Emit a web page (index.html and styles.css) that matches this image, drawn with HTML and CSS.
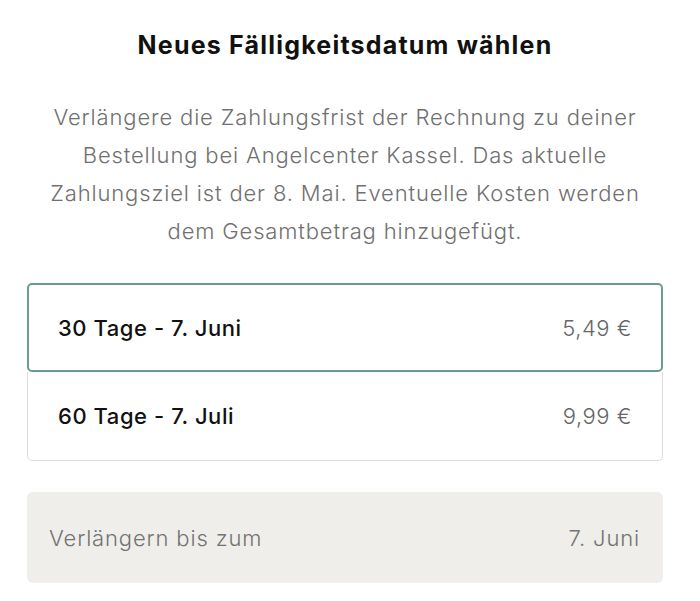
FILE: index.html
```html
<!DOCTYPE html>
<html lang="de">
<head>
    <meta charset="UTF-8">
    <meta name="viewport" content="width=device-width, initial-scale=1.0">
    <title>Neues Fälligkeitsdatum wählen</title>
    <link rel="stylesheet" href="styles.css">
</head>
<body>

<div class="sheet">
    <h1 class="title">Neues Fälligkeitsdatum wählen</h1>
    <p class="intro">Verlängere die Zahlungsfrist der Rechnung zu deiner Bestellung bei Angelcenter Kassel. Das aktuelle Zahlungsziel ist der 8. Mai. Eventuelle Kosten werden dem Gesamtbetrag hinzugefügt.</p>

    <div class="options">
        <div class="option selected">
            <span class="option-label">30 Tage - 7. Juni</span>
            <span class="option-price">5,49 €</span>
        </div>
        <div class="option">
            <span class="option-label">60 Tage - 7. Juli</span>
            <span class="option-price">9,99 €</span>
        </div>
    </div>

    <div class="summary">
        <span>Verlängern bis zum</span>
        <span>7. Juni</span>
    </div>
</div>

</body>
</html>
```

FILE: styles.css
```css
* {
    box-sizing: border-box;
}
body {
    margin: 0;
    background: #fff;
    font-family: 'Inter', 'Open Sans', sans-serif;
    color: #111;
}
.sheet {
    padding: 28px 37px 0 27px;
}
.title {
    margin: 0;
    font-size: 25px;
    font-weight: 700;
    text-align: center;
    line-height: 34px;
    letter-spacing: 1.2px;
}
.intro {
    margin: 36px 8px 0 8px;
    font-size: 22px;
    font-weight: 300;
    letter-spacing: 0.85px;
    line-height: 38px;
    color: #707070;
    text-align: center;
}
.options {
    margin-top: 33px;
    display: flex;
    flex-direction: column;
}
.option {
    display: flex;
    justify-content: space-between;
    align-items: center;
    height: 89px;
    padding: 0 29px;
    border: 1px solid #dcdcdc;
    border-radius: 5px;
    font-size: 22px;
    letter-spacing: 0.5px;
}
.option.selected {
    border: 2px solid #6b9a92;
    padding: 0 29px;
    position: relative;
    z-index: 1;
}
.option + .option {
    border-top: none;
    border-top-left-radius: 0;
    border-top-right-radius: 0;
    padding: 0 30px;
}
.option-label {
    font-weight: 500;
    letter-spacing: 0.55px;
    color: #111;
}
.option-price {
    font-weight: 300;
    color: #666;
}
.summary {
    margin-top: 31px;
    height: 91px;
    display: flex;
    justify-content: space-between;
    align-items: center;
    padding: 0 23px 0 22px;
    background: #efeeeb;
    border-radius: 6px;
    font-size: 22px;
    font-weight: 300;
    letter-spacing: 0.85px;
    color: #737373;
}
```
